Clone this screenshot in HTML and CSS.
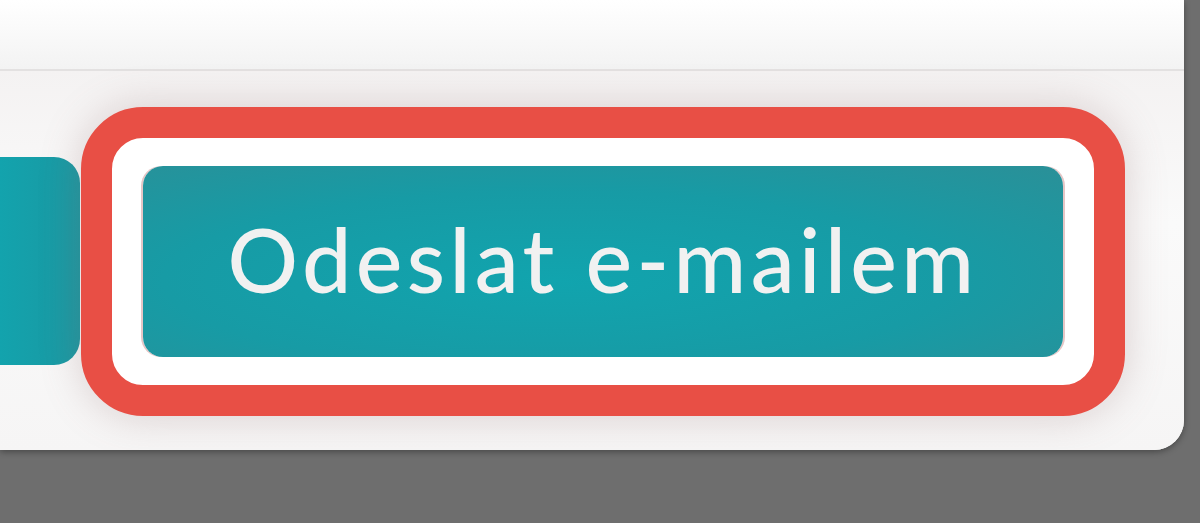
FILE: index.html
```html
<!DOCTYPE html>
<html lang="cs">
<head>
<meta charset="utf-8">
<title>Odeslat e-mailem</title>
<link rel="stylesheet" href="styles.css">
</head>
<body>
<div class="card">
  <div class="header"></div>
  <div class="footer">
    <div class="btn-prev"></div>
    <div class="ring">
      <button class="btn-send">Odeslat e-mailem</button>
    </div>
  </div>
</div>
</body>
</html>
```
FILE: styles.css
```css
html, body {
  margin: 0;
  padding: 0;
}
body {
  width: 1200px;
  height: 523px;
  background: #6e6e6e;
  overflow: hidden;
}
.card {
  width: 1184px;
  height: 450px;
  background: #fbfbfb;
  border-bottom-right-radius: 30px;
  box-shadow: 0 2px 6px rgba(0, 0, 0, 0.35);
  overflow: hidden;
  display: flex;
  flex-direction: column;
}
.header {
  height: 69px;
  flex: none;
  background: linear-gradient(#ffffff, #f3f3f3);
  border-bottom: 2px solid #e3e1e1;
}
.footer {
  flex: 1;
  display: flex;
  align-items: center;
  gap: 1px;
  background: linear-gradient(#f4f2f2, #fafafa 40%, #f6f5f5);
}
.btn-prev {
  width: 80px;
  height: 208px;
  flex: none;
  background: linear-gradient(90deg, #13a3ad, #1a98a2);
  border-radius: 0 26px 26px 0;
}
.ring {
  border: 31px solid #e84f45;
  border-radius: 62px;
  padding: 28px 31px;
  background: #ffffff;
  box-shadow: 0 0 40px rgba(140, 100, 100, 0.28);
  margin-top: 2px;
}
.btn-send {
  display: flex;
  align-items: center;
  justify-content: center;
  width: 920px;
  height: 191px;
  border: none;
  border-radius: 20px;
  background: radial-gradient(ellipse at 45% 60%, #11a4ae 0%, #179ba5 55%, #2a9098 100%);
  box-shadow: -2px 0 0 #e5c6c6, 2px 0 0 #e5c6c6;
  color: #f1f1f1;
  font-family: "Lato", "Noto Sans", sans-serif;
  font-weight: 500;
  font-size: 88px;
  letter-spacing: 4.4px;
  padding: 0 0 6px 0;
  margin: 0;
}
```
